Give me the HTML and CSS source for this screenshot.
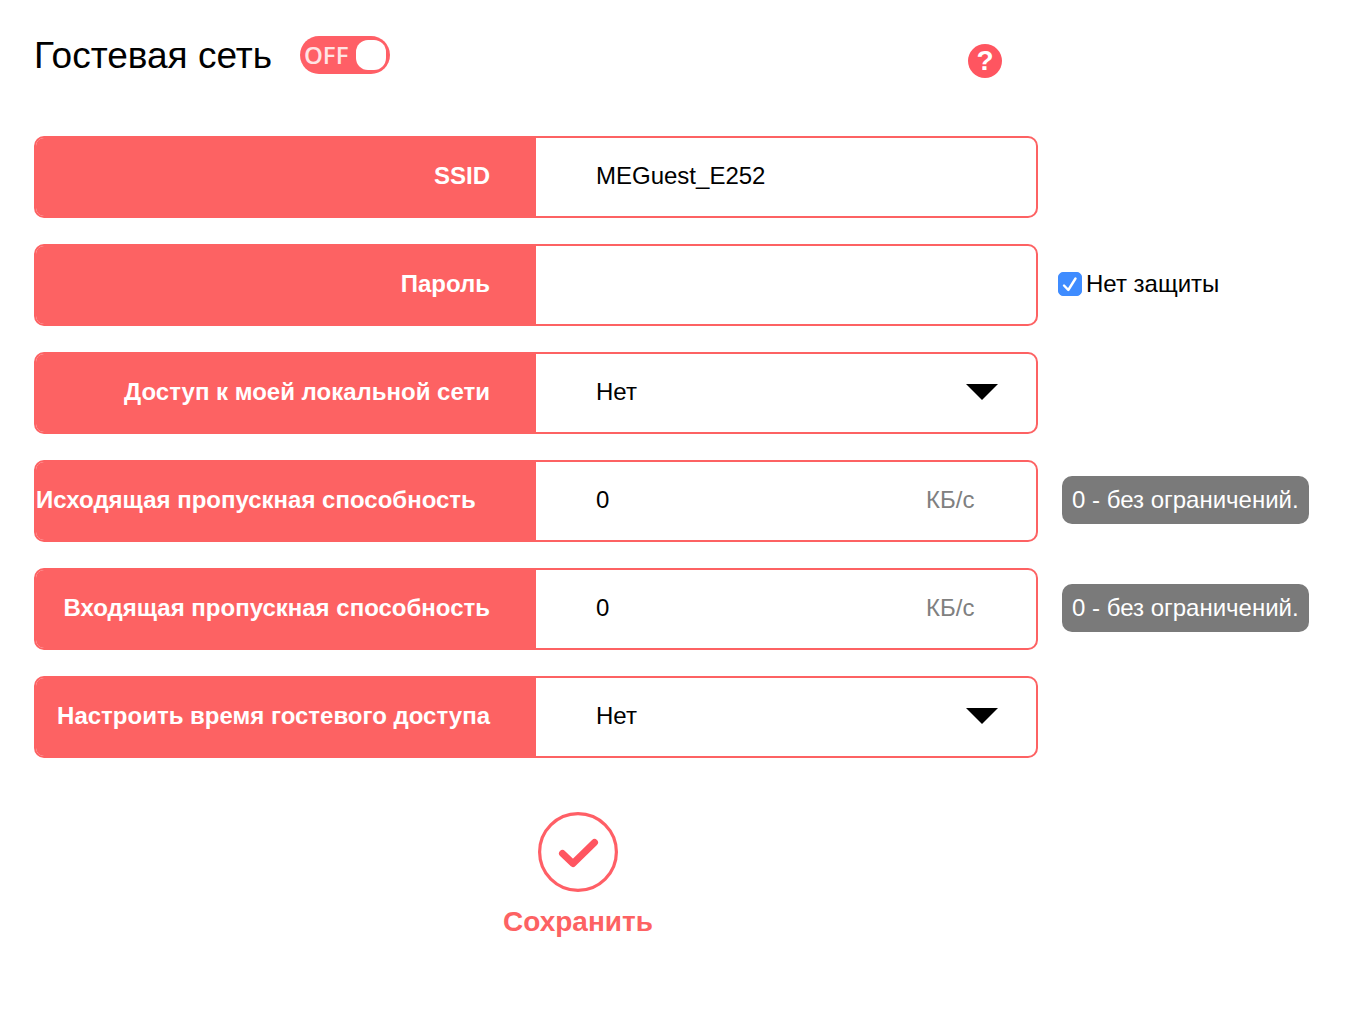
FILE: index.html
```html
<!DOCTYPE html>
<html lang="ru">
<head>
  <meta charset="utf-8">
  <meta name="viewport" content="width=device-width, initial-scale=1">
  <title>Гостевая сеть</title>
  <link rel="stylesheet" href="styles.css">
</head>
<body>
  <form class="page">
    <header class="header">
      <h1 class="title">Гостевая сеть</h1>
      <button class="toggle" type="button" role="switch" aria-checked="false" aria-label="Гостевая сеть">
        <span class="toggle-text">OFF</span>
        <span class="toggle-knob"></span>
      </button>
      <button class="help" type="button" aria-label="Справка">?</button>
    </header>

    <div class="rows">
      <div class="row">
        <div class="field">
          <label class="label" for="ssid">SSID</label>
          <div class="control"><input class="input" id="ssid" type="text" value="MEGuest_E252"></div>
        </div>
      </div>
      <div class="row">
        <div class="field">
          <label class="label" for="password">Пароль</label>
          <div class="control"><input class="input" id="password" type="password"></div>
        </div>
        <div class="option">
          <span class="check">
            <input class="checkbox" id="open" type="checkbox" checked>
            <svg class="tick" viewBox="0 0 24 24" aria-hidden="true">
              <path d="M6 13.500 L10.300 18 L17.500 6.500" fill="none" stroke="#fff" stroke-width="2.400" stroke-linecap="round" stroke-linejoin="round"/>
            </svg>
          </span>
          <label for="open">Нет защиты</label>
        </div>
      </div>
      <div class="row">
        <div class="field">
          <label class="label" for="lan">Доступ к моей локальной сети</label>
          <div class="control">
            <select class="input" id="lan"><option>Нет</option><option>Да</option></select>
            <span class="arrow"></span>
          </div>
        </div>
      </div>
      <div class="row">
        <div class="field">
          <label class="label label-long" for="upload">Исходящая пропускная способность</label>
          <div class="control">
            <input class="input" id="upload" type="text" value="0">
            <span class="unit">КБ/с</span>
          </div>
        </div>
        <span class="hint">0 - без ограничений.</span>
      </div>
      <div class="row">
        <div class="field">
          <label class="label" for="download">Входящая пропускная способность</label>
          <div class="control">
            <input class="input" id="download" type="text" value="0">
            <span class="unit">КБ/с</span>
          </div>
        </div>
        <span class="hint">0 - без ограничений.</span>
      </div>
      <div class="row">
        <div class="field">
          <label class="label" for="schedule">Настроить время гостевого доступа</label>
          <div class="control">
            <select class="input" id="schedule"><option>Нет</option><option>Да</option></select>
            <span class="arrow"></span>
          </div>
        </div>
      </div>
    </div>

    <div class="actions">
      <button class="save" type="submit">
        <svg class="save-icon" viewBox="0 0 80 80" aria-hidden="true">
          <circle cx="40" cy="40" r="38.400" fill="none" stroke="#ff5f66" stroke-width="3.200"/>
          <path d="M24.500 41.500 L35 51.500 L56.500 30.500" fill="none" stroke="#ff5560" stroke-width="7" stroke-linecap="round" stroke-linejoin="round"/>
        </svg>
        <span>Сохранить</span>
      </button>
    </div>
  </form>
</body>
</html>
```
FILE: styles.css
```css
* {
  box-sizing: border-box;
}

body {
  margin: 0;
  background: #fff;
  color: #000;
  font: 24px/28px "Liberation Sans", Arial, sans-serif;
}

button,
input,
select {
  margin: 0;
  padding: 0;
  border: 0;
  background: none;
  color: inherit;
  font: inherit;
}

button {
  cursor: pointer;
}

.page {
  padding: 34px;
}

.header {
  display: flex;
  align-items: center;
  max-width: 968px;
  min-height: 44px;
  margin-bottom: 58px;
}

.title {
  margin: 0 28px 0 0;
  font-size: 37px;
  font-weight: 400;
  line-height: 44px;
}

.toggle {
  display: flex;
  align-items: center;
  justify-content: space-between;
  width: 90px;
  height: 38px;
  margin-bottom: 2px;
  padding: 0 4px;
  border-radius: 19px;
  background: #ff5f66;
}

.toggle-text {
  color: #ffe3e4;
  font-family: "Open Sans", sans-serif;
  font-weight: 600;
}

.toggle-knob {
  width: 30px;
  height: 30px;
  border-radius: 12px;
  background: #fff;
}

.help {
  width: 34px;
  height: 34px;
  margin-top: 10px;
  margin-left: auto;
  border-radius: 50%;
  background: #ff5560;
  color: #fff;
  font-size: 28px;
  font-weight: 700;
  line-height: 34px;
}

.rows {
  display: grid;
  gap: 26px;
}

.row {
  display: grid;
  grid-template-columns: minmax(0, 1004px) auto;
  align-items: center;
  justify-content: start;
}

.field {
  display: grid;
  grid-template-columns: 1fr 1fr;
  min-height: 82px;
  overflow: hidden;
  border: 2px solid #fd6263;
  border-radius: 10px;
}

.label {
  display: flex;
  align-items: center;
  justify-content: flex-end;
  padding: 0 46px 2px 0;
  background: #fd6263;
  color: #fff;
  font-weight: 700;
}

.label-long {
  justify-content: flex-start;
  padding-right: 0;
}

.control {
  display: grid;
  grid-template-columns: 1fr 110px;
  align-items: center;
}

.input {
  grid-area: 1 / 1 / 2 / 3;
  width: 100%;
  height: 100%;
  padding: 0 60px 2px;
  appearance: none;
  outline: none;
}

.arrow {
  grid-area: 1 / 2;
  width: 32px;
  height: 16px;
  margin-bottom: 2px;
  margin-left: 40px;
  background: #000;
  clip-path: polygon(0 0, 100% 0, 50% 100%);
  pointer-events: none;
}

.unit {
  grid-area: 1 / 2;
  padding-bottom: 2px;
  color: #808080;
}

.option {
  display: flex;
  align-items: center;
  gap: 4px;
  margin-bottom: 2px;
  margin-left: 20px;
}

.check {
  display: grid;
}

.checkbox,
.tick {
  grid-area: 1 / 1;
  width: 24px;
  height: 24px;
}

.checkbox {
  appearance: none;
  border: 1px solid #b5b5b5;
  border-radius: 5px;
}

.checkbox:checked {
  border-color: #3f8cff;
  background: #3f8cff;
}

.tick {
  visibility: hidden;
  pointer-events: none;
}

.checkbox:checked + .tick {
  visibility: visible;
}

.hint {
  margin-bottom: 2px;
  margin-left: 24px;
  padding: 10px;
  border-radius: 10px;
  background: #7a7a7a;
  color: #fff;
}

.actions {
  display: flex;
  justify-content: center;
  max-width: 1088px;
  margin-top: 54px;
}

.save {
  display: grid;
  justify-items: center;
  gap: 14px;
  color: #fd6263;
  font-size: 28px;
  font-weight: 700;
  line-height: 32px;
}

.save-icon {
  width: 80px;
  height: 80px;
}

@media (max-width: 1300px) {
  .row {
    grid-template-columns: minmax(0, 1004px);
    gap: 12px;
  }

  .option,
  .hint {
    justify-self: start;
    margin-left: 0;
  }
}
```
